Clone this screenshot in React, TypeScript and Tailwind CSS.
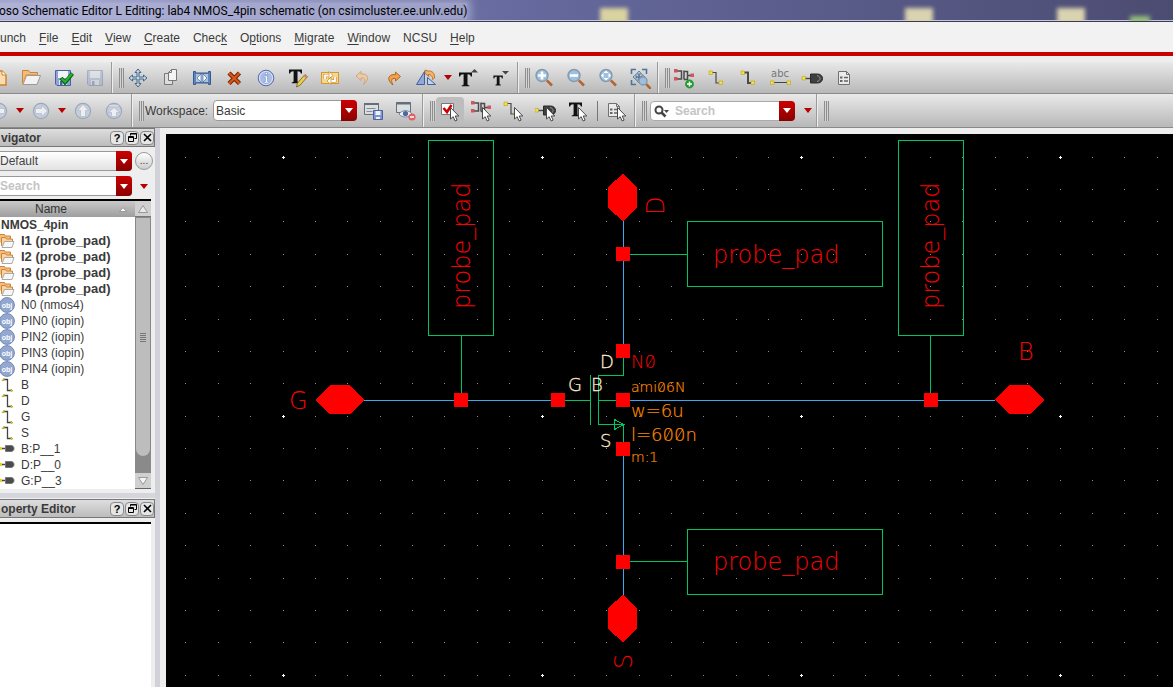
import type { ReactNode } from 'react'

const menus = [
  { before: '', key: 'F', after: 'ile' },
  { before: '', key: 'E', after: 'dit' },
  { before: '', key: 'V', after: 'iew' },
  { before: '', key: 'C', after: 'reate' },
  { before: 'Chec', key: 'k', after: '' },
  { before: 'O', key: 'p', after: 'tions' },
  { before: '', key: 'M', after: 'igrate' },
  { before: '', key: 'W', after: 'indow' },
  { before: 'NCSU', key: '', after: '' },
  { before: '', key: 'H', after: 'elp' },
]

const treeRows = [
  { icon: 'folder', label: 'I1 (probe_pad)' },
  { icon: 'folder', label: 'I2 (probe_pad)' },
  { icon: 'folder', label: 'I3 (probe_pad)' },
  { icon: 'folder', label: 'I4 (probe_pad)' },
  { icon: 'obj', label: 'N0 (nmos4)' },
  { icon: 'obj', label: 'PIN0 (iopin)' },
  { icon: 'obj', label: 'PIN2 (iopin)' },
  { icon: 'obj', label: 'PIN3 (iopin)' },
  { icon: 'obj', label: 'PIN4 (iopin)' },
  { icon: 'net', label: 'B' },
  { icon: 'net', label: 'D' },
  { icon: 'net', label: 'G' },
  { icon: 'net', label: 'S' },
  { icon: 'pin', label: 'B:P__1' },
  { icon: 'pin', label: 'D:P__0' },
  { icon: 'pin', label: 'G:P__3' },
]

/* ---------- icons ---------- */

function Icon({ children }: { children: ReactNode }) {
  return (
    <svg width="22" height="22" viewBox="0 0 22 22" fill="none" className="shrink-0" aria-hidden="true">
      {children}
    </svg>
  )
}

const Cursor = () => (
  <path d="M11.500 7.500v11.500l2.700-2.300 1.900 4.300 2-.9-1.900-4.100h3.600z" fill="#fff" stroke="#4a4a4a" />
)

const NewIcon = () => (
  <Icon>
    <path d="M4 4h10l4 4v10H4z" fill="#fbdcae" stroke="#c9822f" strokeWidth="1.4" />
    <path d="M14 4v4h4" fill="#fff" stroke="#c9822f" />
  </Icon>
)

const OpenIcon = () => (
  <Icon>
    <path d="M2.500 16.500V3.500h6l1.500 2h7.500v3" fill="#f5bd78" stroke="#c98440" />
    <path d="M3 17.500l3.500-9h14l-3.500 9z" fill="#f2f2f2" stroke="#999" />
    <path d="M2.500 17.500l3.300-10h12" stroke="#e9a050" />
  </Icon>
)

const Floppy = ({ faded = false }: { faded?: boolean }) => (
  <g opacity={faded ? 0.35 : 1}>
    <path d="M3.500 3.500h15v15H5l-1.500-1.500z" fill="#8fa3d6" stroke="#4a62a3" />
    <path d="M6 4h10v7H6z" fill="#f1f3f8" />
    <path d="M7 13h8v5H7z" fill="#e3e6ec" />
    <path d="M8 14h2.500v4H8z" fill="#4a62a3" />
  </g>
)

const CheckSaveIcon = () => (
  <Icon>
    <Floppy />
    <path d="M9 11l4 4.500 7.500-9" stroke="#0d5f14" strokeWidth="4" />
    <path d="M9.500 11.500l3.500 3.500 7-8.200" stroke="#22b62e" strokeWidth="2.200" />
  </Icon>
)

const SaveIcon = () => (
  <Icon>
    <Floppy faded />
  </Icon>
)

const MoveIcon = () => (
  <Icon>
    <path
      d="M11 2l3 3.500h-2V10h4.500V8l3.500 3-3.500 3v-2H12v4.500h2L11 20l-3-3.500h2V12H5.500v2L2 11l3.500-3v2H10V5.500H8z"
      fill="#c5d6e6"
      stroke="#456685"
    />
  </Icon>
)

const CopyIcon = () => (
  <Icon>
    <path d="M5.500 6.500h8v11h-8z" fill="#dedede" stroke="#777" />
    <path d="M9.500 5.500l3-3h5v11h-8z" fill="#f4f4f4" stroke="#777" />
    <path d="M9.500 5.500h3v-3" stroke="#777" />
  </Icon>
)

const StretchIcon = () => (
  <Icon>
    <path d="M2.500 4.500h2v1.500h13V4.500h2v13h-2V16h-13v1.500h-2z" fill="#5f86bd" stroke="#36598c" />
    <rect x="5" y="7" width="12" height="8" fill="#a9c2e2" />
    <path d="M10 7v8l-4-4zM12 7v8l4-4z" fill="#fff" stroke="#36598c" strokeWidth=".6" />
  </Icon>
)

const DeleteIcon = () => (
  <Icon>
    <path d="M6 6l10.500 10.500M16.500 6L6 16.500" stroke="#7a2500" strokeWidth="4.400" />
    <path d="M6 6l10.500 10.500M16.500 6L6 16.500" stroke="#d6581a" strokeWidth="2.200" />
  </Icon>
)

const InfoIcon = () => (
  <Icon>
    <circle cx="11" cy="11" r="7.800" fill="#a9bce6" stroke="#5a6fa8" />
    <circle cx="11" cy="11" r="6.500" stroke="#dfe6f7" />
    <path d="M10.500 5.500h2v2h-2zM9 9h3.500v5.500H14V16H9v-1.500h1.500v-4H9z" fill="#fff" stroke="#6f83b8" strokeWidth=".5" />
  </Icon>
)

const BigT = () => (
  <path
    d="M2 3.500h13v4h-1.200c-.2-1.500-1-2.300-3.300-2.300v9.800c0 1 .5 1.200 1.800 1.300v1H4.800v-1c1.300-.1 1.800-.3 1.800-1.300V5.200C4.200 5.200 3.400 6 3.200 7.500H2z"
    fill="#111"
  />
)

const EditTextIcon = () => (
  <Icon>
    <g transform="translate(0 -1)">
      <BigT />
    </g>
    <path d="M9.500 20l1-4 7.500-8.500 2.500 2.200-7.500 8.500z" fill="#ecd04a" stroke="#6e5a10" strokeWidth=".8" />
    <path d="M16.500 9.200l2.500 2.200 1.700-1.800-2.500-2.200z" fill="#d98282" />
  </Icon>
)

const SwapIcon = () => (
  <Icon>
    <rect x="2.500" y="5.500" width="17" height="11" fill="#f6d791" stroke="#d39a2c" />
    <path d="M6 12V8.500h3.500M16 10v4h-3.500" stroke="#c58820" strokeWidth="3" />
    <path d="M6 12V8.500h4M16 10v4h-4" stroke="#fff" strokeWidth="1.800" />
    <path d="M10 4.500l4 4-4 3.500zM12 17.500l-4-3.500 4-4z" fill="#fff" stroke="#c58820" strokeWidth=".7" />
  </Icon>
)

const UndoIcon = () => (
  <Icon>
    <path d="M10 4.500L5 9l5 4.500V11c4-.5 5 1.500 2.500 6.500 6-4.500 5.500-11-2.500-10.500z" fill="#eccba6" stroke="#cfa57c" />
  </Icon>
)

const RedoIcon = () => (
  <Icon>
    <path d="M12.500 5l5 4.500-5 4.500v-2.500c-4-.5-5 1.500-2.500 6.500-6.500-4.500-5.500-11 2.500-10.500z" fill="#f0a04a" stroke="#b8651a" />
  </Icon>
)

const FlipIcon = () => (
  <Icon>
    <path d="M9.500 4.500v13h-8z" fill="#8fa9d8" stroke="#42609c" />
    <path d="M12.500 10.500l8 7h-8z" fill="#c3d2ef" stroke="#42609c" />
    <path d="M10 6.500V3l3 1c4-.5 7 2 6.500 7l-2 1.500c.5-3-1.500-5-4.500-5l1 2z" fill="#f3b26a" stroke="#b8651a" strokeWidth=".8" />
  </Icon>
)

const TextUpIcon = () => (
  <Icon>
    <g transform="translate(-2 2)">
      <BigT />
    </g>
    <path d="M12 5.500L15.500 2 19 5.500z" fill="#444" />
  </Icon>
)

const TextDownIcon = () => (
  <Icon>
    <g transform="translate(1 6) scale(.72)">
      <BigT />
    </g>
    <path d="M11 4h7l-3.500 3.500z" fill="#444" />
  </Icon>
)

const Lens = ({ cx = 9, cy = 8.5, r = 6 }: { cx?: number; cy?: number; r?: number }) => (
  <>
    <path d={`M${cx + r * 0.8} ${cy + r * 0.8}L${cx + r + 4} ${cy + r + 4}`} stroke="#b3662a" strokeWidth="2.600" />
    <circle cx={cx} cy={cy} r={r} fill="#9cc0e0" stroke="#8798a8" strokeWidth="1.400" />
  </>
)

const ZoomInIcon = () => (
  <Icon>
    <Lens />
    <path d="M9 4.500v8M5 8.500h8" stroke="#fff" strokeWidth="2.600" />
  </Icon>
)

const ZoomOutIcon = () => (
  <Icon>
    <Lens />
    <path d="M5 8.500h8" stroke="#fff" strokeWidth="2.600" />
  </Icon>
)

const ZoomFitIcon = () => (
  <Icon>
    <Lens />
    <path d="M9 3.500L11.500 6h-5zM9 13.500L6.500 11h5zM4 8.500L6.500 6v5zM14 8.500L11.500 11V6z" fill="#fff" />
  </Icon>
)

const ZoomSelectIcon = () => (
  <Icon>
    <path d="M2.500 7V2.500H7M13 2.500h4.500V7M2.500 13v4.500H7" stroke="#4d7599" strokeWidth="1.600" />
    <path d="M10 4l2.500 3h-5zM4 10l3-2.500v5zM16 10l-3-2.500v5zM10 16l-2.500-3h5z" fill="#c5d8ea" stroke="#4d7599" strokeWidth=".9" />
    <path d="M10 7v6M7 10h6" stroke="#4d7599" strokeWidth="1.500" />
    <Lens cx={14} cy={14} r={4} />
  </Icon>
)

const InstanceShape = () => (
  <>
    <path d="M3 4h5.500v8H3M11 3.500v9M11 4.500h3.500v8H11M15 8.500h4" stroke="#4a4a4a" strokeWidth="1.500" />
    <path d="M1 2h3.500v3.500H1zM1 10h3.500v3.500H1zM17.500 6.500H21V10h-3.500z" fill="#d0565c" />
  </>
)

const InstanceIcon = () => (
  <Icon>
    <InstanceShape />
    <circle cx="16.500" cy="17" r="4.400" fill="#1f9a2c" />
    <path d="M16.500 14.500v5M14 17h5" stroke="#fff" strokeWidth="1.500" />
  </Icon>
)

const WireShape = ({ thick = false }: { thick?: boolean }) => (
  <>
    <path d="M6 5.500h5v10.500h5" stroke="#4a4a4a" strokeWidth={thick ? 2 : 1.2} />
    <path d="M4 4h3.500v3.500H4zM14 14h3.500v3.500H14z" fill="#f0e04a" stroke="#b5a51f" strokeWidth=".6" />
  </>
)

const WireIcon = () => (
  <Icon>
    <WireShape />
  </Icon>
)

const WideWireIcon = () => (
  <Icon>
    <WireShape thick />
  </Icon>
)

const LabelIcon = () => (
  <Icon>
    <text x="2" y="10" fontSize="10" fontFamily="DejaVu Sans, sans-serif" fill="#777">
      abc
    </text>
    <path d="M3 15.500h18" stroke="#444" />
    <path d="M1.500 14H5v3.500H1.500zM18 14h3.500v3.500H18z" fill="#f0e04a" stroke="#b5a51f" strokeWidth=".6" />
  </Icon>
)

const PinShape = () => (
  <>
    <path d="M3 11.500h7" stroke="#444" strokeWidth="1.400" />
    <path d="M1 9.500h3.500V13H1z" fill="#f0e04a" stroke="#b5a51f" strokeWidth=".6" />
    <path d="M9.500 7h7c3 0 5 2 5 4.500S19.500 16 16.500 16h-7z" fill="#3f3f3f" stroke="#2a2a2a" />
    <path d="M16 8.500c2 .5 3 1.500 3 3s-1 2.500-3 3" stroke="#999" />
  </>
)

const PinIcon = () => (
  <Icon>
    <PinShape />
  </Icon>
)

const SheetShape = () => (
  <>
    <path d="M5.500 4.500h8l3 3v10h-11z" fill="#ebebeb" stroke="#707070" />
    <path d="M7 10.500h2.500M7 14h2.500" stroke="#666" strokeWidth="2" />
    <path d="M11 10.500h4M11 14h4" stroke="#666" strokeWidth="1.500" />
    <path d="M13.500 4.500v3h3" stroke="#707070" />
  </>
)

const SheetIcon = () => (
  <Icon>
    <SheetShape />
  </Icon>
)

const arrows: Record<string, string> = {
  left: 'M4.500 11l6-5.500v3h6v5h-6v3z',
  right: 'M17.500 11l-6-5.500v3h-6v5h6v3z',
  up: 'M11 4.500l5.500 6h-3v6h-5v-6h-3z',
  top: 'M11 7.500l5.500 5h-3v4h-5v-4h-3zM6 5h10v1.800H6z',
}

const RoundArrowIcon = ({ dir }: { dir: string }) => (
  <Icon>
    <circle cx="11" cy="11" r="7.600" fill="#c6cedb" stroke="#9ba8bc" strokeWidth="1.200" />
    <path d={arrows[dir]} fill="#eceef1" stroke="#aab4c4" strokeWidth=".6" />
  </Icon>
)

const WorkspaceSaveIcon = () => (
  <Icon>
    <path d="M2.500 3.500h14v11h-14z" fill="#dcdfe1" stroke="#666f77" />
    <path d="M2 4h15" stroke="#666f77" strokeWidth="2" />
    <path d="M4.500 8.500h9M4.500 11.500h6" stroke="#868e96" />
    <path d="M11.500 10.500h9v9h-9z" fill="#7f95cc" stroke="#4a62a3" />
    <path d="M13.500 11h5v4h-5zM14 17h4v2h-4z" fill="#eef1f7" />
  </Icon>
)

const WorkspaceHideIcon = () => (
  <Icon>
    <path d="M2.500 2.500h14v10h-14z" fill="#dcdfe1" stroke="#666f77" />
    <path d="M2 3.500h15" stroke="#666f77" strokeWidth="2" />
    <path d="M5 14c3-4.500 10-4.500 13 0-3 4-10 4-13 0z" fill="#eef2f8" stroke="#7288aa" />
    <circle cx="11.500" cy="13.500" r="2.600" fill="#4d6a99" />
    <circle cx="18" cy="17" r="3.600" fill="#dd6264" />
    <path d="M16 17h4" stroke="#fff" strokeWidth="1.500" />
  </Icon>
)

const SelectAllIcon = () => (
  <Icon>
    <path d="M2.500 3.500h12v11h-12z" fill="#fff" stroke="#777" />
    <path d="M4.500 8l3.500 4 4.500-7" stroke="#d00000" strokeWidth="2.600" />
    <Cursor />
  </Icon>
)

const SelectInstanceIcon = () => (
  <Icon>
    <g transform="translate(-1 -1)">
      <InstanceShape />
    </g>
    <Cursor />
  </Icon>
)

const SelectWireIcon = () => (
  <Icon>
    <g transform="translate(-3 -2)">
      <WireShape />
    </g>
    <Cursor />
  </Icon>
)

const SelectPinIcon = () => (
  <Icon>
    <g transform="translate(-1 -1)">
      <PinShape />
    </g>
    <Cursor />
  </Icon>
)

const SelectTextIcon = () => (
  <Icon>
    <g transform="translate(0 -1)">
      <BigT />
    </g>
    <Cursor />
  </Icon>
)

const SelectSheetIcon = () => (
  <Icon>
    <g transform="translate(-3 -1)">
      <SheetShape />
    </g>
    <Cursor />
  </Icon>
)

function Caret({ className }: { className: string }) {
  return (
    <svg width="8" height="5" viewBox="0 0 8 5" className={className} aria-hidden="true">
      <path d="M0 0h8L4 5z" fill="currentColor" />
    </svg>
  )
}

function RowIcon({ type }: { type: string }) {
  if (type === 'folder') {
    return (
      <svg width="16" height="16" viewBox="0 0 16 16" fill="none" className="shrink-0" aria-hidden="true">
        <path d="M.5 10V1.500h5L6.500 3h5v4" fill="#f5bd78" stroke="#c98440" />
        <path d="M2.500 13V4.500h4L7.500 6h6v3" fill="#f9d29c" stroke="#c98440" />
        <path d="M3 14.500L5.500 8.500h9.500l-2 6z" fill="#f7f7f7" stroke="#aaa" />
      </svg>
    )
  }
  if (type === 'obj') {
    return (
      <svg width="16" height="16" viewBox="0 0 16 16" className="shrink-0" aria-hidden="true">
        <circle cx="8" cy="8" r="7.400" fill="#92a8d0" stroke="#7489b4" />
        <text x="8" y="10.500" textAnchor="middle" fontSize="7" fontWeight="700" fontFamily="Liberation Sans, sans-serif" fill="#fff">
          obj
        </text>
      </svg>
    )
  }
  if (type === 'net') {
    return (
      <svg width="16" height="16" viewBox="0 0 16 16" fill="none" className="shrink-0" aria-hidden="true">
        <path d="M4 2.500h4.500v11H13" stroke="#444" strokeWidth="1.300" />
        <path d="M3 3.500l2-2v2zM12 14v-2l2 2z" fill="#e4d32b" stroke="#c5b420" />
      </svg>
    )
  }
  return (
    <svg width="16" height="16" viewBox="0 0 16 16" fill="none" className="shrink-0" aria-hidden="true">
      <path d="M0 7.500h6" stroke="#444" strokeWidth="1.500" />
      <path d="M0 6h3v3H0z" fill="#e4d32b" />
      <path d="M6.500 4.500H12c2 0 3 1.500 3 3s-1 3-3 3H6.500z" fill="#4a4a4a" stroke="#777" />
    </svg>
  )
}

/* ---------- toolbar pieces ---------- */

function Grip() {
  return <div className="h-5 w-[5px] shrink-0 border-x border-[#8e8e8e] bg-[linear-gradient(90deg,#d4d4d4_1px,#8e8e8e_1px,#8e8e8e_2px,#d4d4d4_2px)]" />
}

function Tool({ label, active, children }: { label: string; active?: boolean; children: ReactNode }) {
  return (
    <button
      type="button"
      aria-label={label}
      className={`flex h-7 w-7 shrink-0 items-center justify-center ${active ? 'rounded bg-[#bdbdbd]' : ''}`}
    >
      {children}
    </button>
  )
}

function DropButton({ label }: { label: string }) {
  return (
    <button type="button" aria-label={label} className="w-2 shrink-0">
      <Caret className="text-[#b80000]" />
    </button>
  )
}

function RedArrow() {
  return (
    <span className="pointer-events-none absolute inset-y-0 right-0 flex w-4 items-center justify-center rounded-r bg-linear-to-b from-[#cc0000] to-[#8a0000]">
      <Caret className="text-white" />
    </span>
  )
}

const groupClass = 'flex shrink-0 items-center border-r border-[#9a9a9a] shadow-[1px_0_0_#eeeeee]'

const headerButton = 'flex h-3.5 w-3.5 items-center justify-center rounded border border-[#888] bg-[#e6e6e6]'

function PanelHeader({ title }: { title: string }) {
  return (
    <div className="flex h-[19px] shrink-0 items-center border-y border-r border-[#777] bg-linear-to-b from-[#dedede] to-[#bcbcbc]">
      <h2 className="flex-1 pl-px text-xs font-bold text-[#3a3a3a]">{title}</h2>
      <div className="flex gap-px">
        <button type="button" aria-label="Help" className={`${headerButton} text-[11px] leading-3 font-bold text-black`}>
          ?
        </button>
        <button type="button" aria-label="Undock" className={headerButton}>
          <svg width="9" height="9" viewBox="0 0 9 9" fill="none" className="shrink-0" aria-hidden="true">
            <path d="M2.500 2.500v-2h6v5h-2M2.500 1h6" stroke="#000" />
            <path d="M.5 3.500h5v5h-5zM.5 4.500h5" stroke="#000" />
          </svg>
        </button>
        <button type="button" aria-label="Close" className={headerButton}>
          <svg width="9" height="9" viewBox="0 0 9 9" fill="none" className="shrink-0" aria-hidden="true">
            <path d="M1 1l7 7M8 1L1 8" stroke="#000" strokeWidth="1.600" />
          </svg>
        </button>
      </div>
    </div>
  )
}

function Navigator() {
  return (
    <section className="flex flex-col">
      <PanelHeader title="vigator" />
      <div className="mt-1 flex items-center">
        <div className="relative h-5 w-[132px]">
          <select aria-label="View filter" className="block h-full w-full appearance-none rounded-r border border-l-0 border-[#999] bg-linear-to-b from-white to-[#e2e2e2] text-xs text-[#444]">
            <option>Default</option>
          </select>
          <RedArrow />
        </div>
        <button type="button" aria-label="More" className="ml-[3px] h-[18px] w-[18px] rounded-full border border-[#999] bg-linear-to-b from-white to-[#ccc] text-[10px] leading-3">
          ...
        </button>
      </div>
      <div className="mt-[5px] flex items-center">
        <div className="relative h-5 w-[132px]">
          <input
            aria-label="Search objects"
            placeholder="Search"
            className="block h-full w-full rounded-r border border-l-0 border-[#999] bg-white text-xs font-bold placeholder:text-[#c4c4c4]"
          />
          <RedArrow />
        </div>
        <div className="ml-2 flex">
          <DropButton label="Search options" />
        </div>
      </div>
      <div className="mt-[3px] mr-1 flex border-t-2 border-black bg-white">
        <div className="min-w-0 flex-1">
          <div className="flex h-4 items-center bg-linear-to-b from-[#c9c9c9] to-[#9e9e9e] text-xs text-[#333]">
            <span className="flex-1 pl-[35px]">Name</span>
            <svg width="8" height="5" viewBox="0 0 8 5" className="mr-2" aria-hidden="true">
              <path d="M.5 4.500L4 .8l3.500 3.700z" fill="#fff" stroke="#777" strokeWidth=".6" />
            </svg>
          </div>
          <ul className="text-xs text-[#3a3a3a]">
            <li className="h-4 pl-px leading-4 font-bold">NMOS_4pin</li>
            {treeRows.map((row) => (
              <li key={row.label} className={`-ml-px flex h-4 items-center gap-1.5 leading-4 ${row.icon === 'folder' ? 'text-[13px] font-bold' : ''}`}>
                <RowIcon type={row.icon} />
                {row.label}
              </li>
            ))}
          </ul>
        </div>
        <div className="flex w-4 flex-col bg-[#8a8a8a]">
          <button type="button" aria-label="Scroll up" className="flex h-4 items-center justify-center border-b border-[#777] bg-[#d0d0d0]">
            <svg width="10" height="8" viewBox="0 0 10 8" aria-hidden="true">
              <path d="M.5 7.500L5 .5l4.500 7z" fill="#e8e8e8" stroke="#999" />
            </svg>
          </button>
          <div className="flex flex-1 flex-col items-center justify-center gap-px rounded-b-full border border-[#888] bg-[#bdbdbd]">
            <span className="h-px w-1.5 bg-[#777]" />
            <span className="h-px w-1.5 bg-[#777]" />
            <span className="h-px w-1.5 bg-[#777]" />
            <span className="h-px w-1.5 bg-[#777]" />
            <span className="h-px w-1.5 bg-[#777]" />
          </div>
          <button type="button" aria-label="Scroll down" className="mt-4 flex h-4 items-center justify-center border-b border-[#666] bg-[#d0d0d0]">
            <svg width="10" height="8" viewBox="0 0 10 8" aria-hidden="true">
              <path d="M.5.5L5 7.500 9.500.5z" fill="#f4f4f4" stroke="#999" />
            </svg>
          </button>
        </div>
      </div>
    </section>
  )
}

/* ---------- schematic ---------- */

const gridX = [0, 32, 64, 97, 129, 161, 194, 226]
const gridY = [0, 32, 64, 97, 129, 162, 194, 226]

const pads = [
  [288, 259],
  [758, 259],
  [385, 259],
  [450, 259],
  [450, 113],
  [450, 210],
  [450, 308],
  [450, 421],
]

const pins = [
  '457,40 471,53 471,74 457,87 442,74 442,53',
  '457,461 471,474 471,495 457,508 442,495 442,474',
  '149,266 164,251 183,251 198,266 184,280 163,280',
  '829,266 843,251 863,251 878,266 864,280 843,280',
]

function Schematic() {
  return (
    <svg
      className="h-full w-full bg-black font-['DejaVu_Sans','DejaVu_Sans_Light',sans-serif] font-extralight"
      fill="none"
      role="img"
      aria-label="NMOS_4pin schematic"
    >
      <defs>
        <pattern id="grid" x="116" y="22" width="259" height="259" patternUnits="userSpaceOnUse">
          {gridY.map((y) =>
            gridX.map((x) => <rect key={`${x}-${y}`} x={x + 1} y={y + 1} width="1" height="1" fill="#8a8a9c" />),
          )}
          <path d="M0 1h3v1H0zM1 0h1v3H1z" fill="#fff" />
        </pattern>
      </defs>
      <rect width="100%" height="100%" fill="url(#grid)" />

      <g stroke="#3aa8ee" shapeRendering="crispEdges">
        <path d="M198 266.500H385M464 266.500H829M457.500 87V210M457.500 322V461" />
      </g>

      <g stroke="#00c463" shapeRendering="crispEdges">
        <rect x="262.500" y="6.500" width="65" height="195" />
        <rect x="732.500" y="6.500" width="65" height="195" />
        <rect x="521.500" y="87.500" width="195" height="65" />
        <rect x="521.500" y="395.500" width="195" height="65" />
        <path d="M295.500 202V259M764.500 202V259M464 120.500H521M464 427.500H521" />
        <path d="M399 266.500H424M424.500 241V291M432.500 241V291M432 241.500H457.500V224M432 266.500H450M432 290.500H457.500V308" />
        <path d="M448.500 285.500V295.500L457.500 290.500z" />
      </g>

      <g fill="#ff0000" shapeRendering="crispEdges">
        {pads.map(([x, y]) => (
          <rect key={`${x}-${y}`} x={x} y={y} width="14" height="14" />
        ))}
        {pins.map((points) => (
          <polygon key={points} points={points} />
        ))}
      </g>

      <g fill="#ff0000" fontSize="24">
        <text x="547" y="129">probe_pad</text>
        <text x="547" y="436">probe_pad</text>
        <text transform="translate(304 175) rotate(-90)">probe_pad</text>
        <text transform="translate(773 175) rotate(-90)">probe_pad</text>
        <text transform="translate(498 81) rotate(-90)">D</text>
        <text transform="translate(466 535) rotate(-90)">S</text>
        <text x="123" y="275">G</text>
        <text x="852" y="226">B</text>
        <text x="465" y="234" fontSize="18">N0</text>
      </g>

      <g fill="#ffe9c8" stroke="#ffe9c8" strokeWidth=".3" fontSize="18">
        <text x="434" y="234">D</text>
        <text x="402" y="257">G</text>
        <text x="425" y="257">B</text>
        <text x="434" y="313">S</text>
      </g>

      <g fill="#ff8a00" stroke="#ff8a00" strokeWidth=".2" fontSize="18">
        <text x="465" y="258" fontSize="14">ami06N</text>
        <text x="465" y="283">w=6u</text>
        <text x="465" y="307">l=600n</text>
        <text x="465" y="328" fontSize="14">m:1</text>
      </g>

      {/* slashes through the zeros */}
      <path d="M481 233L488 222" stroke="#ff0000" strokeWidth=".8" />
      <path d="M493 257L498 249M499 306L505 295M510 306L517 295" stroke="#ff8a00" strokeWidth=".8" />
    </svg>
  )
}

export default function App() {
  return (
    <div className="flex min-h-screen flex-col overflow-hidden bg-[#eeeeee] font-['Liberation_Sans',Arial,sans-serif] text-[#3a3a3a]">
      <header className="relative flex h-[22px] items-center overflow-hidden border-b border-[#3a3a55] bg-linear-to-r from-[#8f92bf] via-[#65699d] via-45% to-[#4c4c72] shadow-[inset_0_-1px_0_#c4c6dc]">
        <span className="absolute top-2 left-[600px] h-4 w-7 bg-[#d9d3a0] blur-[2px]" />
        <span className="absolute top-2 left-[905px] h-4 w-7 bg-[#d9d3b0] blur-[2px]" />
        <span className="absolute top-2 left-[1057px] h-4 w-7 bg-[#d9d3b0] blur-[2px]" />
        <span className="absolute top-4 left-[1130px] h-3 w-5 bg-[#94bd7c] blur-[2px]" />
        <h1 className="relative -ml-px bg-[#d0d2ee]/50 font-[Roboto,'Open_Sans',sans-serif] text-xs whitespace-nowrap text-black shadow-[0_0_8px_4px_rgba(208,210,238,0.5)]">
          oso Schematic Editor L Editing: lab4 NMOS_4pin schematic (on csimcluster.ee.unlv.edu)
        </h1>
      </header>

      <nav className="flex h-[34px] items-center gap-[13px] border-b-4 border-[#c80000] bg-[#f2f2f2] pt-px text-xs">
        <button type="button">unch</button>
        {menus.map((menu) => (
          <button key={menu.before + menu.key + menu.after} type="button">
            {menu.before}
            <u className="underline-offset-2">{menu.key}</u>
            {menu.after}
          </button>
        ))}
      </nav>

      <div className="mt-1.5 flex h-8 overflow-hidden border-b border-[#8a8a8a] bg-linear-to-b from-[#e9e9e9] to-[#b8b8b8]">
        <div className={`${groupClass} -ml-[15px] gap-1 pr-0.5`}>
          <Tool label="New"><NewIcon /></Tool>
          <Tool label="Open"><OpenIcon /></Tool>
          <Tool label="Check and save"><CheckSaveIcon /></Tool>
          <Tool label="Save"><SaveIcon /></Tool>
        </div>
        <div className={`${groupClass} pl-[7px]`}>
          <Grip />
          <div className="flex items-center gap-1 pr-px">
            <Tool label="Move"><MoveIcon /></Tool>
            <Tool label="Copy"><CopyIcon /></Tool>
            <Tool label="Stretch"><StretchIcon /></Tool>
            <Tool label="Delete"><DeleteIcon /></Tool>
            <Tool label="Properties"><InfoIcon /></Tool>
            <Tool label="Edit text"><EditTextIcon /></Tool>
            <Tool label="Repeat"><SwapIcon /></Tool>
            <Tool label="Undo"><UndoIcon /></Tool>
            <Tool label="Redo"><RedoIcon /></Tool>
            <Tool label="Rotate"><FlipIcon /></Tool>
            <DropButton label="Rotate options" />
            <Tool label="Larger text"><TextUpIcon /></Tool>
            <Tool label="Smaller text"><TextDownIcon /></Tool>
          </div>
        </div>
        <div className={`${groupClass} pl-[7px]`}>
          <Grip />
          <div className="flex gap-1 pr-[3px]">
            <Tool label="Zoom in"><ZoomInIcon /></Tool>
            <Tool label="Zoom out"><ZoomOutIcon /></Tool>
            <Tool label="Zoom to fit"><ZoomFitIcon /></Tool>
            <Tool label="Zoom to selected"><ZoomSelectIcon /></Tool>
          </div>
        </div>
        <div className="flex flex-1 items-center pl-[7px]">
          <Grip />
          <div className="flex gap-1">
            <Tool label="Create instance"><InstanceIcon /></Tool>
            <Tool label="Create wire"><WireIcon /></Tool>
            <Tool label="Create wide wire"><WideWireIcon /></Tool>
            <Tool label="Create wire name"><LabelIcon /></Tool>
            <Tool label="Create pin"><PinIcon /></Tool>
            <Tool label="Create note"><SheetIcon /></Tool>
          </div>
        </div>
      </div>

      <div className="flex h-[34px] overflow-hidden border-b border-[#8a8a8a] bg-linear-to-b from-[#e9e9e9] to-[#b8b8b8]">
        <div className={`${groupClass} -ml-[15px] gap-[3px] pr-[3px]`}>
          <Tool label="Back"><RoundArrowIcon dir="left" /></Tool>
          <DropButton label="Back history" />
          <Tool label="Forward"><RoundArrowIcon dir="right" /></Tool>
          <DropButton label="Forward history" />
          <Tool label="Up"><RoundArrowIcon dir="up" /></Tool>
          <Tool label="Top"><RoundArrowIcon dir="top" /></Tool>
        </div>
        <div className={`${groupClass} pr-[3px] pl-[7px]`}>
          <Grip />
          <label htmlFor="workspace" className="w-[69px] pl-px text-xs">
            Workspace:
          </label>
          <div className="relative mr-0.5 h-[21px] w-36">
            <select id="workspace" className="block h-full w-full appearance-none rounded border border-[#999] bg-white pl-0.5 text-xs">
              <option>Basic</option>
            </select>
            <RedArrow />
          </div>
          <div className="flex gap-1">
            <Tool label="Save workspace"><WorkspaceSaveIcon /></Tool>
            <Tool label="Hide assistants"><WorkspaceHideIcon /></Tool>
          </div>
        </div>
        <div className={`${groupClass} pr-[3px] pl-[7px]`}>
          <Grip />
          <div className="ml-px flex items-center gap-1">
            <Tool label="Select all" active><SelectAllIcon /></Tool>
            <Tool label="Select instances"><SelectInstanceIcon /></Tool>
            <Tool label="Select wires"><SelectWireIcon /></Tool>
            <Tool label="Select pins"><SelectPinIcon /></Tool>
            <Tool label="Select text"><SelectTextIcon /></Tool>
            <span className="mx-px h-5 w-px bg-[#777]" />
            <Tool label="Selection filter"><SelectSheetIcon /></Tool>
          </div>
        </div>
        <div className={`${groupClass} pr-1 pl-[7px]`}>
          <Grip />
          <div className="relative mr-[9px] ml-[3px] h-5 w-[145px]">
            <input
              aria-label="Search"
              placeholder="Search"
              className="block h-full w-full rounded border border-[#aaa] bg-white pl-6 text-xs font-bold placeholder:text-[#c4c4c4]"
            />
            <svg width="18" height="14" viewBox="0 0 18 14" fill="none" className="absolute top-1 left-1" aria-hidden="true">
              <circle cx="5" cy="5" r="3.500" stroke="#444" strokeWidth="2" />
              <path d="M7.500 7.500l4 4" stroke="#444" strokeWidth="2.500" />
              <path d="M10 5h5l-2.500 3z" fill="#444" />
            </svg>
            <RedArrow />
          </div>
          <DropButton label="Search options" />
        </div>
        <div className="flex flex-1 items-center pl-[7px]">
          <Grip />
        </div>
      </div>

      <div className="flex flex-1">
        <aside className="flex w-[155px] shrink-0 flex-col">
          <Navigator />
          <div className="mt-1 mb-px h-[5px] bg-[#d4d6dc]" />
          <section className="flex flex-1 flex-col">
            <PanelHeader title="operty Editor" />
            <div className="mt-1 mr-1 flex-1 border-t-2 border-black bg-white" />
          </section>
        </aside>
        <div className="w-[5px] shrink-0 bg-[#d0d2d8]" />
        <main className="min-w-0 flex-1 pt-1.5 pl-1.5">
          <div className="flex h-full">
            <Schematic />
          </div>
        </main>
      </div>
    </div>
  )
}
